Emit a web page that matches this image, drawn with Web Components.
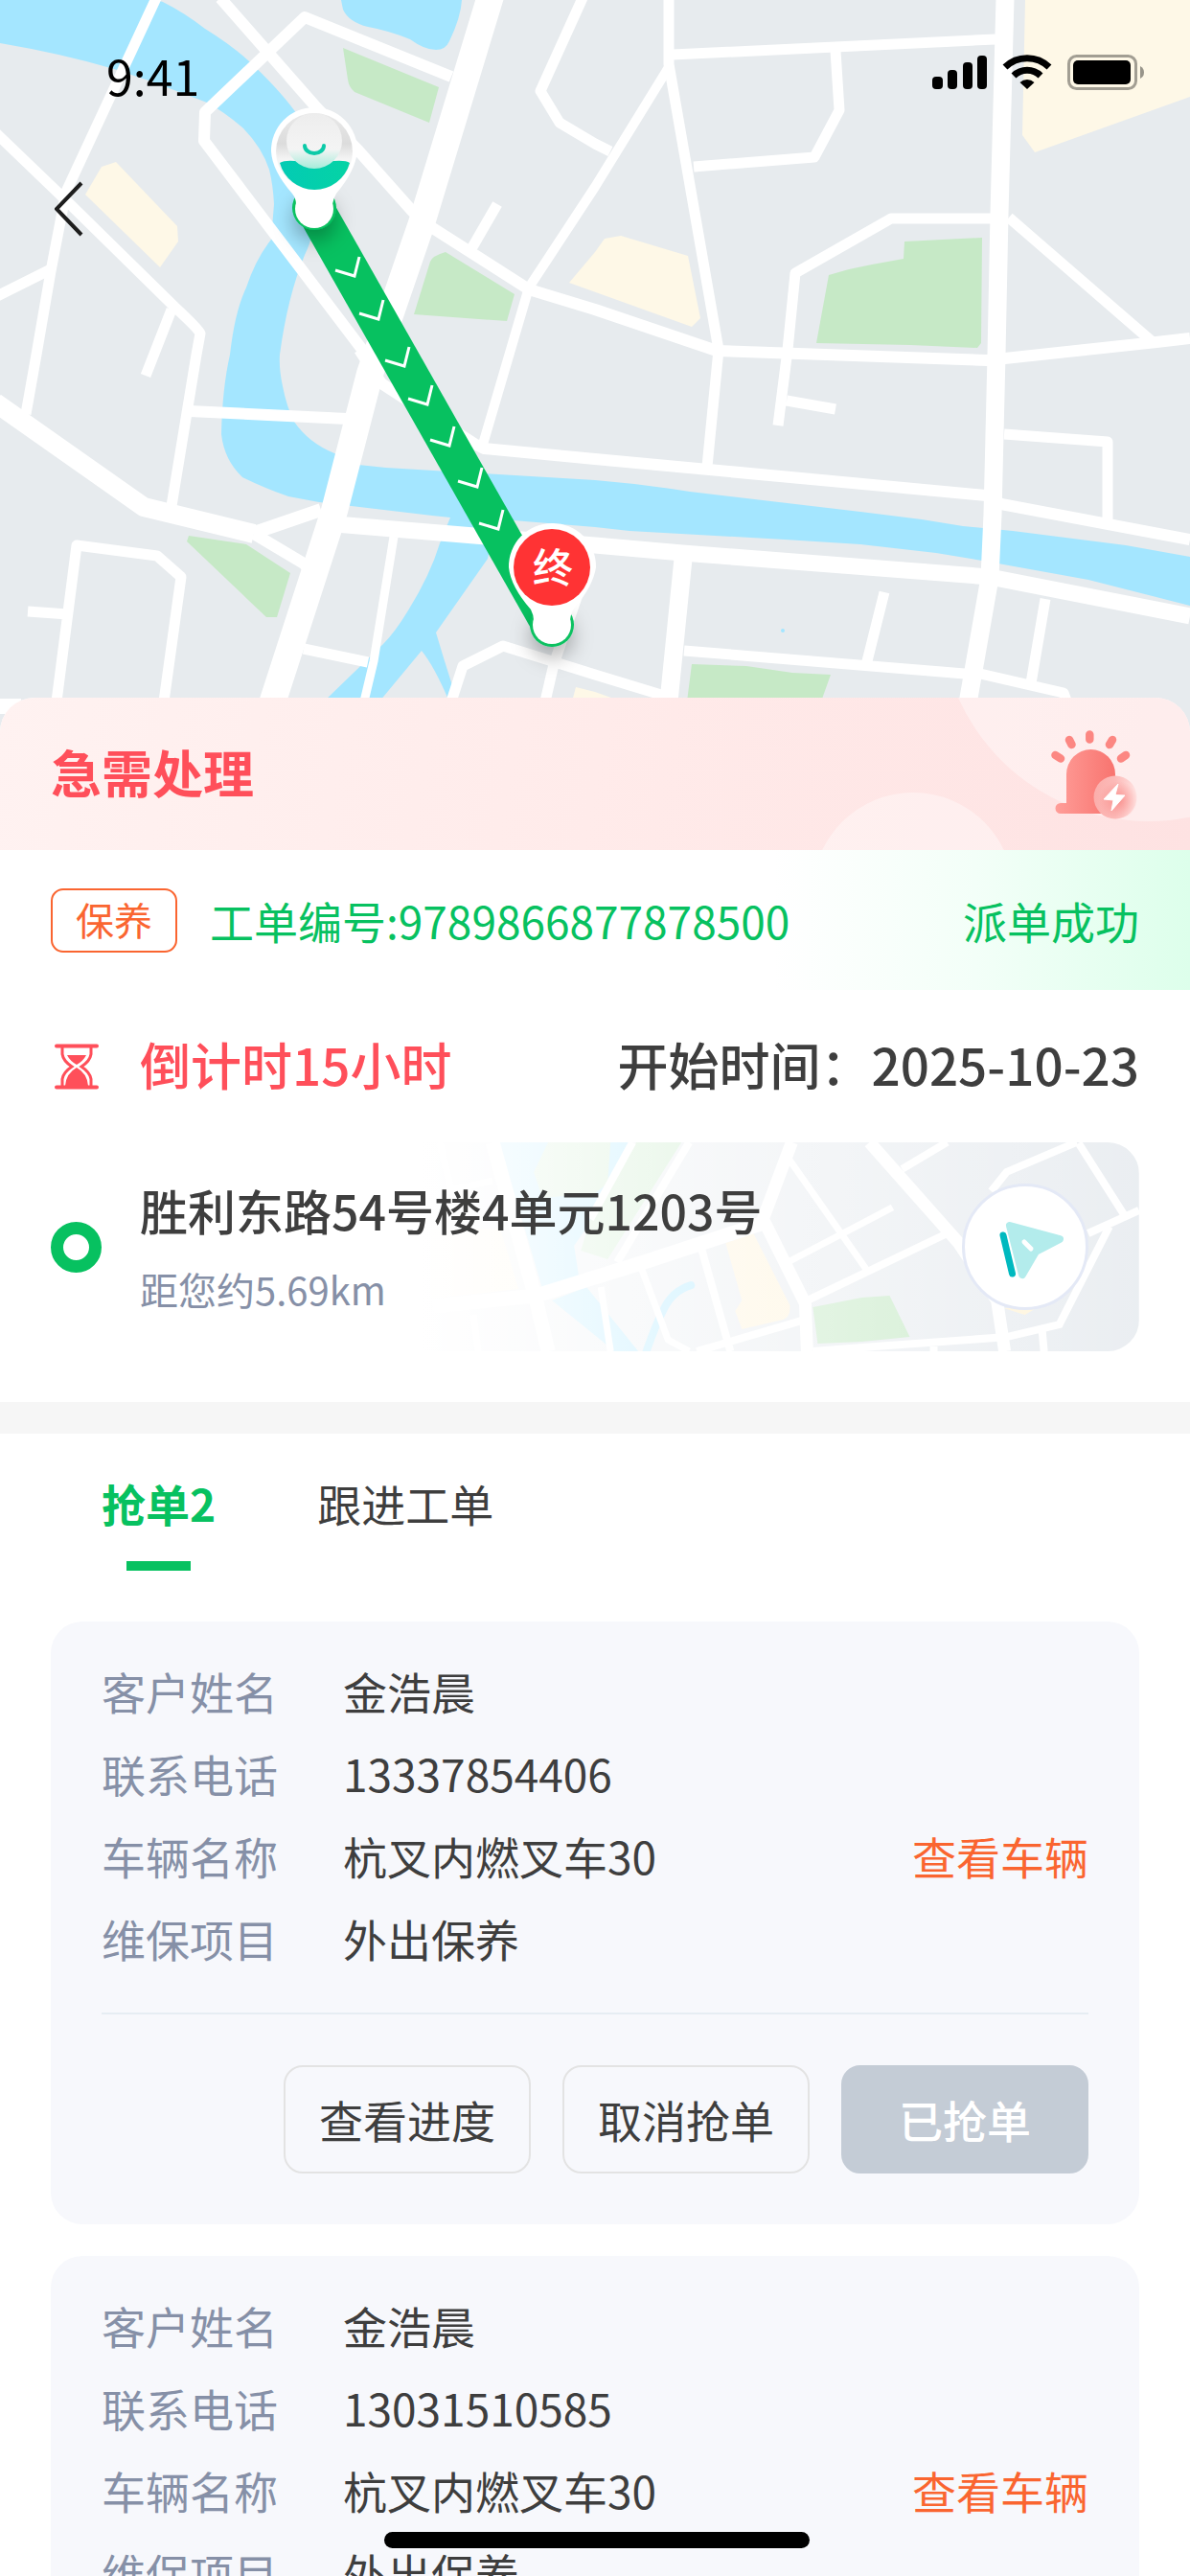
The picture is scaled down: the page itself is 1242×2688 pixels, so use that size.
<!DOCTYPE html>
<html lang="zh-CN">
<head>
<meta charset="utf-8">
<meta name="viewport" content="width=device-width, initial-scale=1">
<title>工单详情</title>
<style>
  :root {
    --color-primary: #07c160;
    --color-danger: #ff4f5a;
    --color-accent: #fa6530;
    --color-text: #3e3e3e;
    --color-muted: #8690a7;
    --page-pad: 53px;
  }
  html, body { height: 100%; }
  body {
    margin: 0;
    background: #fff;
    color: var(--color-text);
    font-family: "Noto Sans CJK SC", "Noto Sans", sans-serif;
    font-size: 46px;
    line-height: 66px;
  }
</style>
</head>
<body>
<order-page>
  <route-map slot="map"><status-bar time="9:41"></status-bar></route-map>
  <urgent-banner>急需处理</urgent-banner>
  <order-summary tag="保养" number="9789866877878500" status="派单成功" start="2025-10-23">倒计时15小时</order-summary>
  <address-card distance="距您约5.69km">胜利东路54号楼4单元1203号</address-card>
  <order-tabs slot="list" labels="抢单2,跟进工单"></order-tabs>
  <grab-card slot="list" name="金浩晨" phone="13337854406" vehicle="杭叉内燃叉车30" project="外出保养"></grab-card>
  <grab-card slot="list" name="金浩晨" phone="13031510585" vehicle="杭叉内燃叉车30" project="外出保养"></grab-card>
</order-page>

<script>
const escapeHtml = (s) => String(s || '').replace(/&/g, '&amp;').replace(/</g, '&lt;').replace(/"/g, '&quot;');

/* Page frame: map on top, white sheet pulled over its lower edge, scrolling content */
class OrderPage extends HTMLElement {
  constructor() {
    super();
    this.attachShadow({ mode: 'open' }).innerHTML = `
      <style>
        :host { display: block; position: relative; height: 100vh; overflow: hidden; }
        main { height: 100%; overflow-y: auto; scrollbar-width: none; }
        .sheet {
          position: relative;
          margin-top: -36px;
          border-radius: 36px 36px 0 0;
          background: #fff;
          overflow: hidden;
        }
        .summary { padding-bottom: var(--page-pad); }
        .list {
          display: flex;
          flex-direction: column;
          gap: 33px;
          padding-bottom: 80px;
          border-top: 33px solid #f6f6f6;
        }
        .home-indicator {
          position: absolute;
          left: 50%;
          bottom: 29px;
          width: 444px;
          height: 17px;
          margin-left: -220px;
          border-radius: 9px;
          background: #000;
        }
      </style>
      <main>
        <slot name="map"></slot>
        <div class="sheet">
          <div class="summary"><slot></slot></div>
          <div class="list"><slot name="list"></slot></div>
        </div>
      </main>
      <div class="home-indicator"></div>
    `;
  }
}
customElements.define('order-page', OrderPage);

class StatusBar extends HTMLElement {
  connectedCallback() {
    this.attachShadow({ mode: 'open' }).innerHTML = `
      <style>
        :host {
          display: flex;
          align-items: center;
          justify-content: space-between;
          padding: 42px 48px 0 111px;
          color: #000;
          font-size: 50px;
          line-height: 72px;
        }
        svg { display: block; width: 221px; height: 38px; margin-bottom: 4px; }
      </style>
      <time>${escapeHtml(this.getAttribute('time'))}</time>
      <svg viewBox="973 57 221 38" aria-hidden="true">
        <rect x="973" y="80" width="11" height="13" rx="4"/>
        <rect x="989" y="73" width="10" height="20" rx="4"/>
        <rect x="1005" y="65" width="10" height="28" rx="4"/>
        <rect x="1020" y="58" width="10" height="35" rx="4"/>
        <g fill="none" stroke="#000" stroke-width="7">
          <path d="M1049 70a33 33 0 0 1 46 0"/>
          <path d="M1058 79a20 20 0 0 1 28 0"/>
        </g>
        <path d="M1064.500 86a11 11 0 0 1 15 0L1072 93z"/>
        <rect x="1115.500" y="58.500" width="70" height="34" rx="8" fill="none" stroke="#000" stroke-opacity=".36" stroke-width="3"/>
        <rect x="1120" y="63" width="60" height="25" rx="5"/>
        <path d="M1190 69q4 2 4 6.500t-4 6.500z" fill-opacity=".4"/>
      </svg>
    `;
  }
}
customElements.define('status-bar', StatusBar);

/* City map with the route from the engineer to the destination */
class RouteMap extends HTMLElement {
  constructor() {
    super();
    // start points of the direction arrows along the route
    const arrows = [[350, 282], [375, 327], [402, 376], [426, 416], [449, 459], [478, 502], [500, 546]];
    this.attachShadow({ mode: 'open' }).innerHTML = `
      <style>
        :host { display: block; position: relative; min-height: 764px; background: #e7ebee; }
        .map { position: absolute; inset: 0; width: 100%; height: 100%; }
        .bar { position: relative; }
        .back {
          position: relative;
          display: block;
          margin: 61px 0 0 43px;
          padding: 14px;
          border: 0;
          background: none;
          cursor: pointer;
        }
        .back svg { display: block; width: 30px; height: 58px; }
        text { font-size: 42px; font-weight: 500; }
      </style>
      <svg class="map" viewBox="0 0 1242 764" preserveAspectRatio="xMinYMin slice" aria-hidden="true">
        <defs>
          <linearGradient id="shell" x1="0" y1="0" x2="0" y2="1">
            <stop offset="0" stop-color="#e9e9e9"/><stop offset=".4" stop-color="#dcdcdc"/><stop offset=".6" stop-color="#f4f4f4"/>
          </linearGradient>
          <linearGradient id="face" x1="0" y1="0" x2="0" y2="1">
            <stop offset="0" stop-color="#ededed"/><stop offset=".65" stop-color="#f4f4f4"/><stop offset="1" stop-color="#a6ecda"/>
          </linearGradient>
          <linearGradient id="body">
            <stop offset="0" stop-color="#03cbb4"/><stop offset="1" stop-color="#05d3a5"/>
          </linearGradient>
          <filter id="shade" x="-100%" y="-100%" width="300%" height="300%">
            <feDropShadow dx="0" dy="12" stdDeviation="10" flood-color="#000" flood-opacity=".28"/>
          </filter>
        </defs>
        <!-- water -->
        <g fill="#a4e6ff">
          <path d="M0 0H163L170 2Q192 13 214 30Q240 46 259 63Q290 92 307 115Q332 150 333 190Q333 235 318 266Q300 310 292 370Q291 385 295 403Q299 424 307 440Q322 462 349 473Q362 481 374 485Q405 489 436 490L621 501Q670 505 720 513L898 534L962 542L1005 549L1057 554L1175 569L1242 581V632L1136 605L1025 585L977 577L898 568L819 563L657 554L621 550L511 541Q515 560 509 583L455 660Q463 687 471 712L478 730H468Q453 695 440 679L396 732H338L400 672Q412 660 426 637Q449 600 459 567L470 540L451 538L333 524L301 518Q275 509 253 498Q234 480 231 453Q232 405 240 370Q245 325 257 300Q267 270 283 250L286 213Q285 193 281 177Q273 153 253 133Q233 116 216 107L158 85L119 72Q65 56 0 45Z"/>
          <path d="M356 0L358 10Q364 23 384 28Q406 32 428 41Q443 52 455 52Q465 52 469 43Q481 18 482 0Z"/>
          <circle cx="817" cy="658" r="2"/>
        </g>
        <!-- parks -->
        <g fill="#c6e9c6">
          <path d="M358 50L458 91L448 128L370 96Q364 91 363 83Z"/>
          <path d="M465 263L537 307L529 335L432 328L449 273Q451 267 465 263Z"/>
          <path d="M944 252L1025 248L1024 358L1020 363L950 360L852 358L865 287Q887 280 910 276L943 270Z"/>
          <path d="M722 693L779 695L827 702L867 704L857 732H717Z"/>
          <path d="M197 559L257 568L303 598L289 644H278L195 565Z"/>
        </g>
        <!-- built-up areas -->
        <g fill="#fef8e7">
          <path d="M121 169L185 236L186 252L167 279L89 203L106 174Z"/>
          <path d="M621 263L631 249L648 246L718 267L731 332L722 341L594 295Z"/>
          <path d="M1070 0H1242V101L1080 159L1067 141Z"/>
          <path d="M601 717L621 722L649 732H597Z"/>
        </g>
        <!-- roads -->
        <g fill="none" stroke="#fff" stroke-width="11" stroke-linejoin="round">
          <path d="M163 -2L69 200L53 283L38 370L27 432"/>
          <path d="M-4 139L73 213L182 320Q207 343 209 348L205 370L179 528"/>
          <path d="M-3 309L53 281M179 323L152 392"/>
          <path d="M230 -2L331 113L374 157L430 220L447 235L552 302L621 323L748 366L1030 376L1207 357L1242 353" stroke-width="12"/>
          <path d="M519 213L493 258"/>
          <path d="M382 370L213 147L214 117L318 18L471 80" stroke-width="12"/>
          <path d="M375 365L398 400L495 463L505 468L621 479L1029 517L1045 526L1242 563" stroke-width="12"/>
          <path d="M608 -2L564 95L584 128L621 150L637 158"/>
          <path d="M698 -2V67L750 365L738 487"/>
          <path d="M698 70L621 195L552 300L503 467" stroke-width="10"/>
          <path d="M702 57L1039 41M872 53L876 115L850 164L724 174"/>
          <path d="M1053 227L1203 357M1041 228H930L830 285L822 365L812 444M821 418L872 427"/>
          <path d="M1048 453L1156 461V544"/>
          <path d="M265 557L317 588L322 594M198 429L362 437" stroke-width="12"/>
          <path d="M265 556L335 532" stroke-width="14"/>
          <path d="M59 732L80 569L164 580L189 602L171 732M29 638L71 641"/>
          <path d="M411 560L390 690L380 732" stroke-width="9"/>
          <path d="M317 677L384 691M471 732L483 695L525 674L621 704L690 725M610 600L578 693L569 732"/>
          <path d="M714 679L1007 703H1023L1110 723L1114 734M923 618L905 690M1091 625L1076 713"/>
          <path d="M-4 737H22" stroke-width="16"/>
          <path d="M350 547L507 560L621 569L712 577L1033 602L1242 643" stroke-width="17"/>
          <path d="M713 583L698 732M1049 -2L1043 223L1040 370L1036 537L1033 603L1010 734" stroke-width="19"/>
          <path d="M-5 420L150 529L265 557" stroke-width="20"/>
          <path d="M512 -4L440 233L386 390L349 533L284 734" stroke-width="28"/>
        </g>
        <!-- route -->
        <path d="M331 222L571 645" stroke="#07c160" stroke-width="40" fill="none"/>
        <g fill="none" stroke="#fff" stroke-width="3">
          ${arrows.map(([x, y]) => `<path d="M${x} ${y}l20 6l5 -20"/>`).join('')}
        </g>
        <!-- start pin -->
        <circle cx="328" cy="217" r="23" fill="#07c160" filter="url(#shade)"/>
        <circle cx="328" cy="218" r="20" fill="#fff"/>
        <path fill="#fff" d="M328 112A45 45 0 0 1 373 158Q371 178 351 202Q348 207 347 213H309Q309 207 305 202Q284 178 283 158A45 45 0 0 1 328 112Z"/>
        <circle cx="328" cy="158" r="40" fill="url(#shell)"/>
        <path fill="url(#body)" d="M292 170Q297 167 308 168H348Q361 167 365 170A38 38 0 0 1 328 198A38 38 0 0 1 292 170Z"/>
        <circle cx="328" cy="147" r="29" fill="url(#face)"/>
        <path d="M318 152a10 8 0 0 0 20 0" fill="none" stroke="#0ccaa8" stroke-width="4" stroke-linecap="round"/>
        <!-- end pin -->
        <circle cx="576" cy="652" r="23" fill="#07c160" filter="url(#shade)"/>
        <circle cx="576" cy="652" r="20" fill="#fff"/>
        <path fill="#fff" d="M576 546A45 45 0 0 1 622 592Q619 612 599 635Q596 639 595 647H557Q557 642 554 636Q533 612 531 592A45 45 0 0 1 576 546Z"/>
        <circle cx="576" cy="592" r="40" fill="#ff3334"/>
        <text x="577" y="608" text-anchor="middle" fill="#fff">终</text>
      </svg>
      <div class="bar"><slot></slot></div>
      <button class="back" aria-label="返回">
        <svg viewBox="0 0 30 58" fill="none" stroke="#1d1d1d" stroke-width="4"><path d="M28 2L2 29L28 56"/></svg>
      </button>
    `;
  }
}
customElements.define('route-map', RouteMap);

class UrgentBanner extends HTMLElement {
  constructor() {
    super();
    this.attachShadow({ mode: 'open' }).innerHTML = `
      <style>
        :host {
          display: flex;
          position: relative;
          align-items: center;
          justify-content: space-between;
          height: 159px;
          padding: 0 var(--page-pad);
          overflow: hidden;
          background: linear-gradient(100deg, #fff2f1, #ffebea 50%, #fee2e2);
        }
        h1 {
          position: relative;
          margin: 0;
          padding-bottom: 6px;
          color: var(--color-danger);
          font-size: 53px;
          font-weight: 700;
          line-height: 76px;
        }
        .bubbles { position: absolute; top: 0; right: 0; width: 460px; height: 159px; }
        .siren { position: relative; width: 92px; height: 98px; }
      </style>
      <svg class="bubbles" viewBox="782 0 460 159" fill="#fff" fill-opacity=".38" aria-hidden="true">
        <circle cx="1199" cy="-89" r="218"/>
        <circle cx="953" cy="204" r="105"/>
      </svg>
      <h1><slot></slot></h1>
      <svg class="siren" viewBox="17 3 92 98" aria-hidden="true">
        <defs>
          <linearGradient id="lamp"><stop offset="0" stop-color="#ff9d98"/><stop offset="1" stop-color="#f8746f"/></linearGradient>
          <linearGradient id="glass">
            <stop offset="0" stop-color="#fbaeab"/><stop offset=".5" stop-color="#fcbab8"/><stop offset="1" stop-color="#ffe3e2"/>
          </linearGradient>
          <radialGradient id="glow">
            <stop offset="0" stop-color="#f87f7c" stop-opacity=".75"/><stop offset="1" stop-color="#f98d8a" stop-opacity="0"/>
          </radialGradient>
        </defs>
        <path fill="url(#lamp)" d="M33 82V52A25.500 26 0 0 1 84 52V93H27A5.500 5.500 0 0 1 27 82Z"/>
        <g stroke="#fc8782" stroke-width="8.500" stroke-linecap="round">
          <path d="M57.300 10.500V15.500M36 16L38.500 21M81 16L78 21M21.500 32L27 35.500M95 32L90 35.500"/>
        </g>
        <circle cx="84" cy="76" r="22.500" fill="url(#glass)"/>
        <circle cx="87" cy="79" r="20" fill="url(#glow)"/>
        <path fill="#fff" stroke="#fff" stroke-linejoin="round" d="M87 62L84 73.500L94 74L80 90L82 79L72 78Z"/>
      </svg>
    `;
  }
}
customElements.define('urgent-banner', UrgentBanner);

class OrderSummary extends HTMLElement {
  connectedCallback() {
    const attr = (name) => escapeHtml(this.getAttribute(name));
    this.attachShadow({ mode: 'open' }).innerHTML = `
      <style>
        :host { display: block; }
        .row { display: flex; align-items: center; padding: 0 var(--page-pad); }
        .number {
          height: 146px;
          gap: 34px;
          color: var(--color-primary);
          background: linear-gradient(90deg, #fff 65%, #f3fff8 82%, #ddffeb);
        }
        .tag {
          box-sizing: border-box;
          width: 132px;
          padding-bottom: 3px;
          border: 2px solid var(--color-accent);
          border-radius: 13px;
          color: var(--color-accent);
          font-size: 40px;
          line-height: 60px;
          text-align: center;
        }
        .status { margin-left: auto; }
        .time { height: 159px; gap: 40px; font-size: 53px; font-weight: 500; line-height: 76px; }
        .icon { display: flex; justify-content: center; width: 53px; }
        .icon svg { width: 46px; height: 48px; }
        .countdown, .start { padding-bottom: 6px; }
        .countdown { color: var(--color-danger); }
        .start { margin-left: auto; }
      </style>
      <div class="row number">
        <span class="tag">${attr('tag')}</span>
        <span>工单编号:${attr('number')}</span>
        <span class="status">${attr('status')}</span>
      </div>
      <div class="row time">
        <span class="icon">
          <svg viewBox="0 0 46 48" fill="none" stroke="#ff4f5a" stroke-linecap="round" aria-hidden="true">
            <path stroke-width="4" d="M2 2.500H44M2 45.500H44"/>
            <path stroke-width="3" d="M8 4V11Q9 18 18 24Q9 30 8 37V44M38 4V11Q37 18 28 24Q37 30 38 37V44"/>
            <path fill="#ff4f5a" stroke="none" d="M13 12H33Q30 18 23 22Q16 18 13 12ZM23 25Q34 31 35 44H11Q12 31 23 25Z"/>
          </svg>
        </span>
        <span class="countdown"><slot></slot></span>
        <span class="start">开始时间：${attr('start')}</span>
      </div>
    `;
  }
}
customElements.define('order-summary', OrderSummary);

/* Destination address over a faded street map, with the navigation button */
class AddressCard extends HTMLElement {
  connectedCallback() {
    this.attachShadow({ mode: 'open' }).innerHTML = `
      <style>
        :host {
          display: flex;
          position: relative;
          align-items: center;
          gap: 40px;
          height: 218px;
          margin: 0 var(--page-pad);
          padding-right: 53px;
          border-radius: 33px;
          overflow: hidden;
        }
        .streets { position: absolute; top: 0; right: 0; width: 66%; height: 100%; }
        .dot {
          box-sizing: border-box;
          flex: none;
          width: 53px;
          height: 53px;
          border: 13px solid var(--color-primary);
          border-radius: 50%;
        }
        .text { position: relative; flex: 1; }
        h2 { margin: 0; font-size: 50px; font-weight: 500; line-height: 68px; }
        p { margin: 20px 0 0; color: var(--color-muted); font-size: 40px; line-height: 58px; }
        button {
          box-sizing: border-box;
          position: relative;
          width: 132px;
          height: 132px;
          padding: 0;
          border: 3px solid #e4e9f6;
          border-radius: 50%;
          background: #fff;
          cursor: pointer;
        }
        button svg { display: block; width: 126px; height: 126px; }
      </style>
      <svg class="streets" viewBox="0 0 749 218" preserveAspectRatio="xMaxYMid slice" aria-hidden="true">
        <defs>
          <linearGradient id="fade"><stop offset="0" stop-color="#fff"/><stop offset="1" stop-color="#fff" stop-opacity=".1"/></linearGradient>
        </defs>
        <path fill="#e8ecf0" d="M0 0H749V218H0Z"/>
        <path fill="#a4e6ff" d="M82 0H217L193 60L160 108L165 140L127 153ZM137 165L173 151L227 218H201L190 208Z"/>
        <path fill="none" stroke="#a4e6ff" stroke-width="8" stroke-linecap="round" d="M282 149Q262 155 253 175Q245 190 234 222"/>
        <path fill="#c6e9c6" d="M133 0H198L195 43L182 53L127 58L118 31ZM225 0H272L195 122L167 113L177 80ZM409 172L460 162L489 160L510 203L460 208L414 210Z"/>
        <path fill="#fef3d9" d="M318 105L347 95L385 170Q386 182 378 185L335 195L328 176L335 165ZM10 90H83L102 153L10 163ZM608 173H642L630 180Z"/>
        <g fill="none" stroke="#fff" stroke-width="8">
          <path stroke-width="15" d="M75 0L120 163L133 218M13 171L120 160L233 125L355 85"/>
          <path stroke-width="13" d="M387 0L357 80L401 168L403 218M468 0L561 105L601 165L609 218"/>
          <path d="M221 0L177 80M280 0L205 125M292 108L323 218M288 218L397 186"/>
          <path stroke-width="7" d="M188 151L198 218M230 131L258 206L280 218M383 16L465 133M383 125L492 68M20 0L32 50L75 40M55 180L60 218"/>
          <path d="M403 165L547 96M502 28L549 0M595 51L611 31L684 0M686 1L733 75M696 95L749 71"/>
          <path d="M718 88L666 190L611 203L474 213L409 218M535 213V218M648 196L650 218"/>
        </g>
        <path fill="url(#fade)" d="M0 0H749V218H0Z"/>
      </svg>
      <span class="dot"></span>
      <div class="text">
        <h2><slot></slot></h2>
        <p>${escapeHtml(this.getAttribute('distance'))}</p>
      </div>
      <button aria-label="导航">
        <svg viewBox="1007 1238 126 126" stroke-linecap="round" stroke-linejoin="round" aria-hidden="true">
          <path fill="#b3ecec" stroke="#b3ecec" stroke-width="8" d="M1054 1279L1106 1293L1081 1306L1067 1330Z"/>
          <path stroke="#00b9bf" stroke-width="7" d="M1047 1289L1056.500 1329"/>
          <path stroke="#fff" stroke-width="5" d="M1069 1296L1076 1303"/>
        </svg>
      </button>
    `;
  }
}
customElements.define('address-card', AddressCard);

class OrderTabs extends HTMLElement {
  connectedCallback() {
    const labels = this.getAttribute('labels').split(',');
    this.attachShadow({ mode: 'open' }).innerHTML = `
      <style>
        :host { display: flex; gap: 106px; padding: 39px 106px 20px; }
        button {
          display: flex;
          flex-direction: column;
          align-items: center;
          gap: 28px;
          padding: 0;
          border: 0;
          background: none;
          color: inherit;
          font: inherit;
          cursor: pointer;
        }
        button::after { content: ""; width: 67px; height: 10px; }
        [aria-selected="true"] { color: var(--color-primary); font-weight: 700; }
        [aria-selected="true"]::after { background: var(--color-primary); }
      </style>
      ${labels.map((label, i) => `<button role="tab" aria-selected="${i === 0}">${escapeHtml(label)}</button>`).join('')}
    `;
    this.setAttribute('role', 'tablist');
    const tabs = this.shadowRoot.querySelectorAll('button');
    tabs.forEach((tab) => tab.addEventListener('click', () => {
      tabs.forEach((t) => t.setAttribute('aria-selected', String(t === tab)));
    }));
  }
}
customElements.define('order-tabs', OrderTabs);

class GrabCard extends HTMLElement {
  connectedCallback() {
    const attr = (name) => escapeHtml(this.getAttribute(name));
    this.attachShadow({ mode: 'open' }).innerHTML = `
      <style>
        :host {
          display: block;
          margin: 0 var(--page-pad);
          padding: 39px var(--page-pad) 53px;
          border-radius: 33px;
          background: #f7f8fc;
        }
        dl { display: flex; flex-direction: column; gap: 20px; margin: 0; padding-bottom: 45px; }
        dl div { display: flex; gap: 68px; }
        dt { color: var(--color-muted); }
        dd { margin: 0; }
        dd.link { margin-left: auto; }
        a { color: var(--color-accent); text-decoration: none; }
        footer {
          display: flex;
          justify-content: flex-end;
          gap: 33px;
          padding-top: 53px;
          border-top: 2px solid #e6edf3;
        }
        button {
          box-sizing: border-box;
          width: 258px;
          height: 113px;
          padding: 0 0 2px;
          border: 2px solid #e3e3e3;
          border-radius: 20px;
          background: none;
          color: inherit;
          font: inherit;
          cursor: pointer;
        }
        button:disabled { border-color: #c4ccd6; background: #c4ccd6; color: #fff; font-weight: 500; cursor: default; }
      </style>
      <dl>
        <div><dt>客户姓名</dt><dd>${attr('name')}</dd></div>
        <div><dt>联系电话</dt><dd>${attr('phone')}</dd></div>
        <div><dt>车辆名称</dt><dd>${attr('vehicle')}</dd><dd class="link"><a href="#vehicle">查看车辆</a></dd></div>
        <div><dt>维保项目</dt><dd>${attr('project')}</dd></div>
      </dl>
      <footer>
        <button>查看进度</button>
        <button>取消抢单</button>
        <button disabled>已抢单</button>
      </footer>
    `;
  }
}
customElements.define('grab-card', GrabCard);
</script>
</body>
</html>
